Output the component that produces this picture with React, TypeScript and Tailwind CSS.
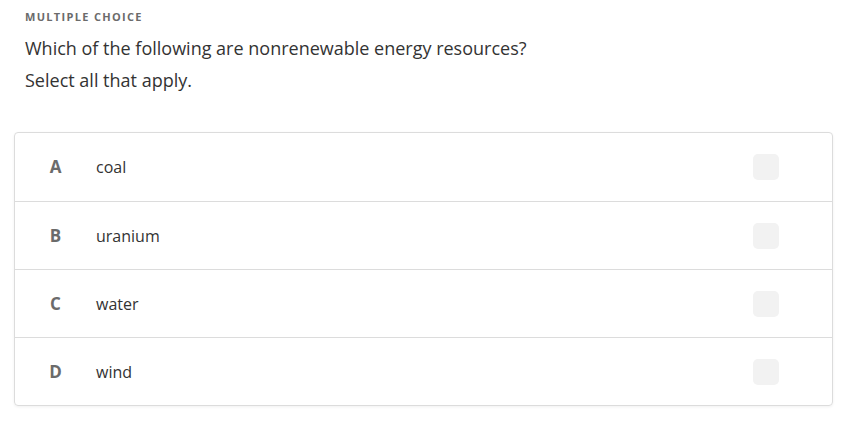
import React from 'react';

const options = [
  { letter: 'A', text: 'coal' },
  { letter: 'B', text: 'uranium' },
  { letter: 'C', text: 'water' },
  { letter: 'D', text: 'wind' },
];

const App: React.FC = () => {
  return (
    <div className="min-h-screen bg-white font-['Open_Sans',sans-serif] text-[#333]">
      <div className="pl-[25px] pr-[14px] pt-[10px]">
        <p className="text-[11px] font-bold tracking-[0.12em] text-[#6b6b6b] leading-[14px]">MULTIPLE CHOICE</p>
        <p className="mt-[8px] text-[18px] leading-[32px] text-[#333]">Which of the following are nonrenewable energy resources?</p>
        <p className="text-[18px] leading-[32px] text-[#333]">Select all that apply.</p>
      </div>

      <div className="ml-[14px] mr-[13px] mt-[36px] rounded-[4px] border border-[#dcdcdc] shadow-[0_1px_3px_rgba(0,0,0,0.06)]">
        {options.map((opt, i) => (
          <div
            key={opt.letter}
            className={`flex h-[68px] items-center ${i > 0 ? 'border-t border-[#dcdcdc]' : ''}`}
          >
            <span className="w-[81px] text-center text-[17px] font-bold text-[#6b6b6b]">{opt.letter}</span>
            <span className="flex-grow text-[16px] text-[#333]">{opt.text}</span>
            <div className="mr-[53px] h-[26px] w-[26px] rounded-[5px] bg-[#f2f2f2]"></div>
          </div>
        ))}
      </div>
    </div>
  );
};

export default App;
